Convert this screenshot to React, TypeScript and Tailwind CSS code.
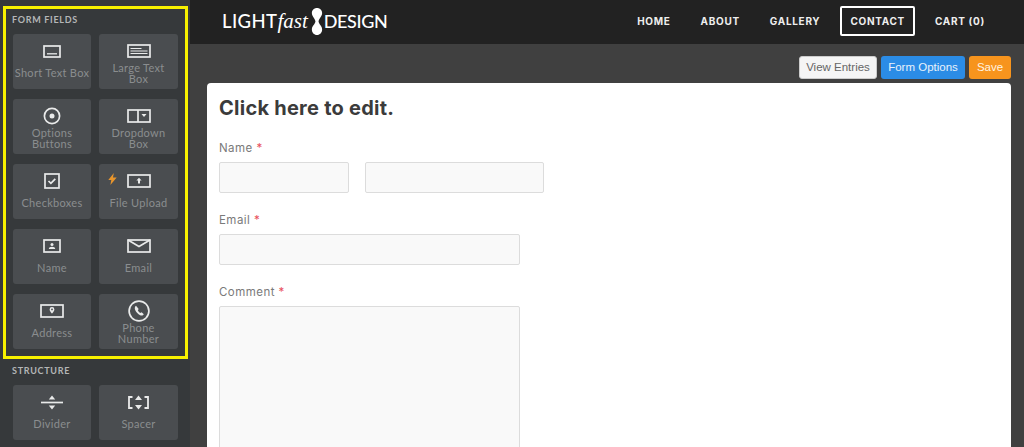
import { ReactNode } from 'react';

const stroke = 'currentColor';

const ShortTextIcon = () => (
  <svg width="18" height="13" viewBox="0 0 18 13" fill="none">
    <rect x="1" y="1" width="16" height="11" stroke={stroke} strokeWidth="1.7" />
    <path d="M4 8.800h10" stroke={stroke} strokeWidth="1.3" />
  </svg>
);

const LargeTextIcon = () => (
  <svg width="24" height="14" viewBox="0 0 24 14" fill="none">
    <rect x="1" y="1" width="22" height="12" stroke={stroke} strokeWidth="1.7" />
    <path d="M3.500 4.500h11M3.500 7h17M3.500 9.500h17" stroke={stroke} strokeWidth="1" />
  </svg>
);

const OptionsIcon = () => (
  <svg width="18" height="18" viewBox="0 0 18 18" fill="none">
    <circle cx="9" cy="9" r="7.600" stroke={stroke} strokeWidth="1.700" />
    <circle cx="9" cy="9" r="2.500" fill={stroke} />
  </svg>
);

const DropdownIcon = () => (
  <svg width="24" height="14" viewBox="0 0 24 14" fill="none">
    <rect x="1" y="1" width="22" height="12" stroke={stroke} strokeWidth="1.700" />
    <path d="M11 1v12" stroke={stroke} strokeWidth="1.700" />
    <path d="M14.500 5h5L17 8z" fill={stroke} />
  </svg>
);

const CheckboxIcon = () => (
  <svg width="16" height="16" viewBox="0 0 16 16" fill="none">
    <rect x="1" y="1" width="14" height="14" stroke={stroke} strokeWidth="1.700" />
    <path d="M4.500 8l2.400 2.400 4.400-4.600" stroke={stroke} strokeWidth="1.700" />
  </svg>
);

const UploadIcon = () => (
  <svg width="24" height="14" viewBox="0 0 24 14" fill="none">
    <rect x="1" y="1" width="22" height="12" stroke={stroke} strokeWidth="1.700" />
    <path d="M12 3.800l2.600 2.800h-1.600v2.900h-2V6.600H9.400z" fill={stroke} />
  </svg>
);

const NameIcon = () => (
  <svg width="18" height="14" viewBox="0 0 18 14" fill="none">
    <rect x="1" y="1" width="16" height="12" stroke={stroke} strokeWidth="1.700" />
    <circle cx="9" cy="5.600" r="1.500" fill={stroke} />
    <path d="M5.800 10c0-1.600 1.400-2.300 3.200-2.300s3.200.7 3.200 2.300z" fill={stroke} />
  </svg>
);

const EmailIcon = () => (
  <svg width="24" height="14" viewBox="0 0 24 14" fill="none">
    <rect x="1" y="1" width="22" height="12" stroke={stroke} strokeWidth="1.700" />
    <path d="M1 1l11 6.500L23 1" stroke={stroke} strokeWidth="1.700" />
  </svg>
);

const AddressIcon = () => (
  <svg width="24" height="14" viewBox="0 0 24 14" fill="none">
    <rect x="1" y="1" width="22" height="12" stroke={stroke} strokeWidth="1.700" />
    <path
      d="M12 3a2.400 2.400 0 0 1 2.400 2.400c0 1.700-2.400 4.200-2.400 4.200s-2.400-2.500-2.400-4.200A2.400 2.400 0 0 1 12 3z"
      fill={stroke}
    />
    <circle cx="12" cy="5.400" r="0.900" fill="#4a4d50" />
  </svg>
);

const PhoneIcon = () => (
  <svg width="22" height="22" viewBox="0 0 22 22" fill="none">
    <circle cx="11" cy="11" r="9.900" stroke={stroke} strokeWidth="1.700" />
    <path
      d="M8 5.800c-1.400.9-1.500 2.700-.7 4.500.9 2 2.700 3.900 4.800 4.900 1.500.7 3 .4 3.700-.9l-2.200-2-1.300.8c-1-.6-1.900-1.600-2.500-2.800l.9-1.200z"
      fill={stroke}
    />
  </svg>
);

const DividerIcon = () => (
  <svg width="22" height="15" viewBox="0 0 22 15" fill="none">
    <path d="M0 7.500h22" stroke={stroke} strokeWidth="1.700" />
    <path d="M11 0.500l3.200 4H7.800zM11 14.500l3.200-4H7.800z" fill={stroke} />
  </svg>
);

const SpacerIcon = () => (
  <svg width="21" height="15" viewBox="0 0 21 15" fill="none">
    <path d="M4.500 2H1v11h3.500M16.500 2H20v11h-3.500" stroke={stroke} strokeWidth="1.800" />
    <path d="M10.500 0.500l3.500 4.500H7zM10.500 14.500L14 10H7z" fill={stroke} />
  </svg>
);

const Bolt = () => (
  <svg
    width="9"
    height="12"
    viewBox="0 0 9 12"
    className="absolute left-[9px] top-[9px]"
  >
    <path d="M5.800 0L0.300 6.900h3L2.400 12 8.700 4.600H5z" fill="#e8952c" />
  </svg>
);

const Tile = ({
  icon,
  label,
  bolt,
}: {
  icon: ReactNode;
  label: ReactNode;
  bolt?: boolean;
}) => (
  <div className="relative h-[55px] rounded-[3px] bg-[#4a4d50] flex flex-col items-center">
    {bolt && <Bolt />}
    <div className="mt-[6px] h-[22px] flex items-center justify-center text-[#e9eaea] shrink-0">
      {icon}
    </div>
    <div className="-mt-[1px] h-[23px] w-full flex items-center justify-center text-center text-[11px] leading-[11px] tracking-[0.3px] text-[#8a8d8f] font-['Lato',sans-serif]">
      {label}
    </div>
  </div>
);

const SectionTitle = ({ children }: { children: ReactNode }) => (
  <h2 className="-ml-[1px] text-[9px] leading-[11px] font-bold tracking-[0.7px] text-[#b4b6b7] font-['Lato',sans-serif]">
    {children}
  </h2>
);

const formFields = [
  { icon: <ShortTextIcon />, label: 'Short Text Box' },
  { icon: <LargeTextIcon />, label: <>Large Text<br />Box</> },
  { icon: <OptionsIcon />, label: <>Options<br />Buttons</> },
  { icon: <DropdownIcon />, label: <>Dropdown<br />Box</> },
  { icon: <CheckboxIcon />, label: 'Checkboxes' },
  { icon: <UploadIcon />, label: 'File Upload', bolt: true },
  { icon: <NameIcon />, label: 'Name' },
  { icon: <EmailIcon />, label: 'Email' },
  { icon: <AddressIcon />, label: 'Address' },
  { icon: <PhoneIcon />, label: <>Phone<br />Number</> },
];

const navItems = ['HOME', 'ABOUT', 'GALLERY', 'CONTACT', 'CART (0)'];

const Sidebar = () => (
  <aside className="w-[190px] shrink-0 h-full overflow-hidden bg-[#36393b] pt-[6px]">
    <section className="ml-[3px] w-[185px] h-[353px] border-[3px] border-[#f7f100] pt-[5px] pl-[7px]">
      <SectionTitle>FORM FIELDS</SectionTitle>
      <div className="mt-[9px] grid grid-cols-[78px_79px] gap-x-[8px] gap-y-[10px]">
        {formFields.map((field, i) => (
          <Tile key={i} {...field} />
        ))}
      </div>
    </section>
    <section className="pl-[13px] pt-[6px]">
      <SectionTitle>STRUCTURE</SectionTitle>
      <div className="mt-[9px] grid grid-cols-[78px_79px] gap-x-[8px]">
        <Tile icon={<DividerIcon />} label="Divider" />
        <Tile icon={<SpacerIcon />} label="Spacer" />
      </div>
    </section>
  </aside>
);

const Logo = () => (
  <div className="flex items-center text-white font-['Lato',sans-serif] font-medium text-[18.5px] leading-none">
    <span className="tracking-[0.4px]">LIGHT</span>
    <span className="font-['Liberation_Serif',serif] italic text-[21px] mr-[3px]">
      fast
    </span>
    <svg width="12" height="27" viewBox="0 0 14 28" preserveAspectRatio="none" className="mr-[1px]">
      <path
        d="M7 0c3.400 0 6 2.300 6 5.300 0 3.600-3.600 5.400-4.200 8.700.6 3.300 4.200 4.400 4.200 8.300 0 3.200-2.600 5.700-6 5.700s-6-2.500-6-5.700c0-3.900 3.600-5 4.200-8.300C4.600 10.700 1 8.900 1 5.300 1 2.300 3.600 0 7 0z"
        fill="#fff"
      />
    </svg>
    <span className="text-[18px] tracking-[-0.4px]">DESIGN</span>
  </div>
);

const Field = ({ className }: { className: string }) => (
  <div
    className={`h-[31px] rounded-[2px] border border-[#dcdcdc] bg-[#f9f9f9] ${className}`}
  />
);

const Label = ({ children }: { children: ReactNode }) => (
  <label className="block text-[11.5px] leading-[16px] tracking-[0.45px] text-[#7a7a7a] font-['Inter',sans-serif]">
    {children} <span className="text-[#e8505b]">*</span>
  </label>
);

export default function App() {
  return (
    <div className="flex h-[447px] w-[1024px] overflow-hidden bg-[#404040]">
      <Sidebar />
      <div className="flex-1 min-w-0 flex flex-col">
        <header className="h-[44px] shrink-0 bg-[#222222] flex items-center justify-between pl-[32px] pr-[24px] pb-[2px]">
          <Logo />
          <nav className="flex items-center text-[10px] font-bold tracking-[0.7px] text-[#eeeeee] font-['Inter',sans-serif]">
            {navItems.map((item) => (
              <a
                key={item}
                className={
                  item === 'CONTACT'
                    ? 'h-[30px] mx-[5px] flex items-center px-[8px] rounded-[2px] border-2 border-white'
                    : 'h-[30px] flex items-center px-[15px]'
                }
              >
                {item}
              </a>
            ))}
          </nav>
        </header>
        <main className="flex-1 min-h-0 pl-[17px] pr-[13px] pt-[12px]">
          <div className="flex justify-end gap-[4px] h-[23px] text-[11.5px] font-['Liberation_Sans',sans-serif]">
            <button className="w-[78px] rounded-[3px] bg-[#f5f5f5] border border-[#ccc] text-[#666]">
              View Entries
            </button>
            <button className="w-[84px] rounded-[3px] bg-[#2b8ce6] text-[#e8f2fb]">
              Form Options
            </button>
            <button className="w-[42px] rounded-[3px] bg-[#f7941d] text-[#fff3e0]">
              Save
            </button>
          </div>
          <div className="mt-[4px] h-[400px] rounded-[4px] bg-white pl-[12px] pt-[13px]">
            <h1 className="text-[20px] leading-[24px] font-bold tracking-[0.25px] text-[#3b3b3b] font-['Inter',sans-serif]">
              Click here to edit.
            </h1>
            <div className="mt-[20px]">
              <Label>Name</Label>
              <div className="mt-[6px] flex gap-[16px]">
                <Field className="w-[130px]" />
                <Field className="w-[179px]" />
              </div>
            </div>
            <div className="mt-[19px]">
              <Label>Email</Label>
              <Field className="mt-[6px] w-[301px]" />
            </div>
            <div className="mt-[19px]">
              <Label>Comment</Label>
              <div className="mt-[6px] w-[301px] h-[200px] rounded-[2px] border border-[#dcdcdc] bg-[#f9f9f9]" />
            </div>
          </div>
        </main>
      </div>
    </div>
  );
}
